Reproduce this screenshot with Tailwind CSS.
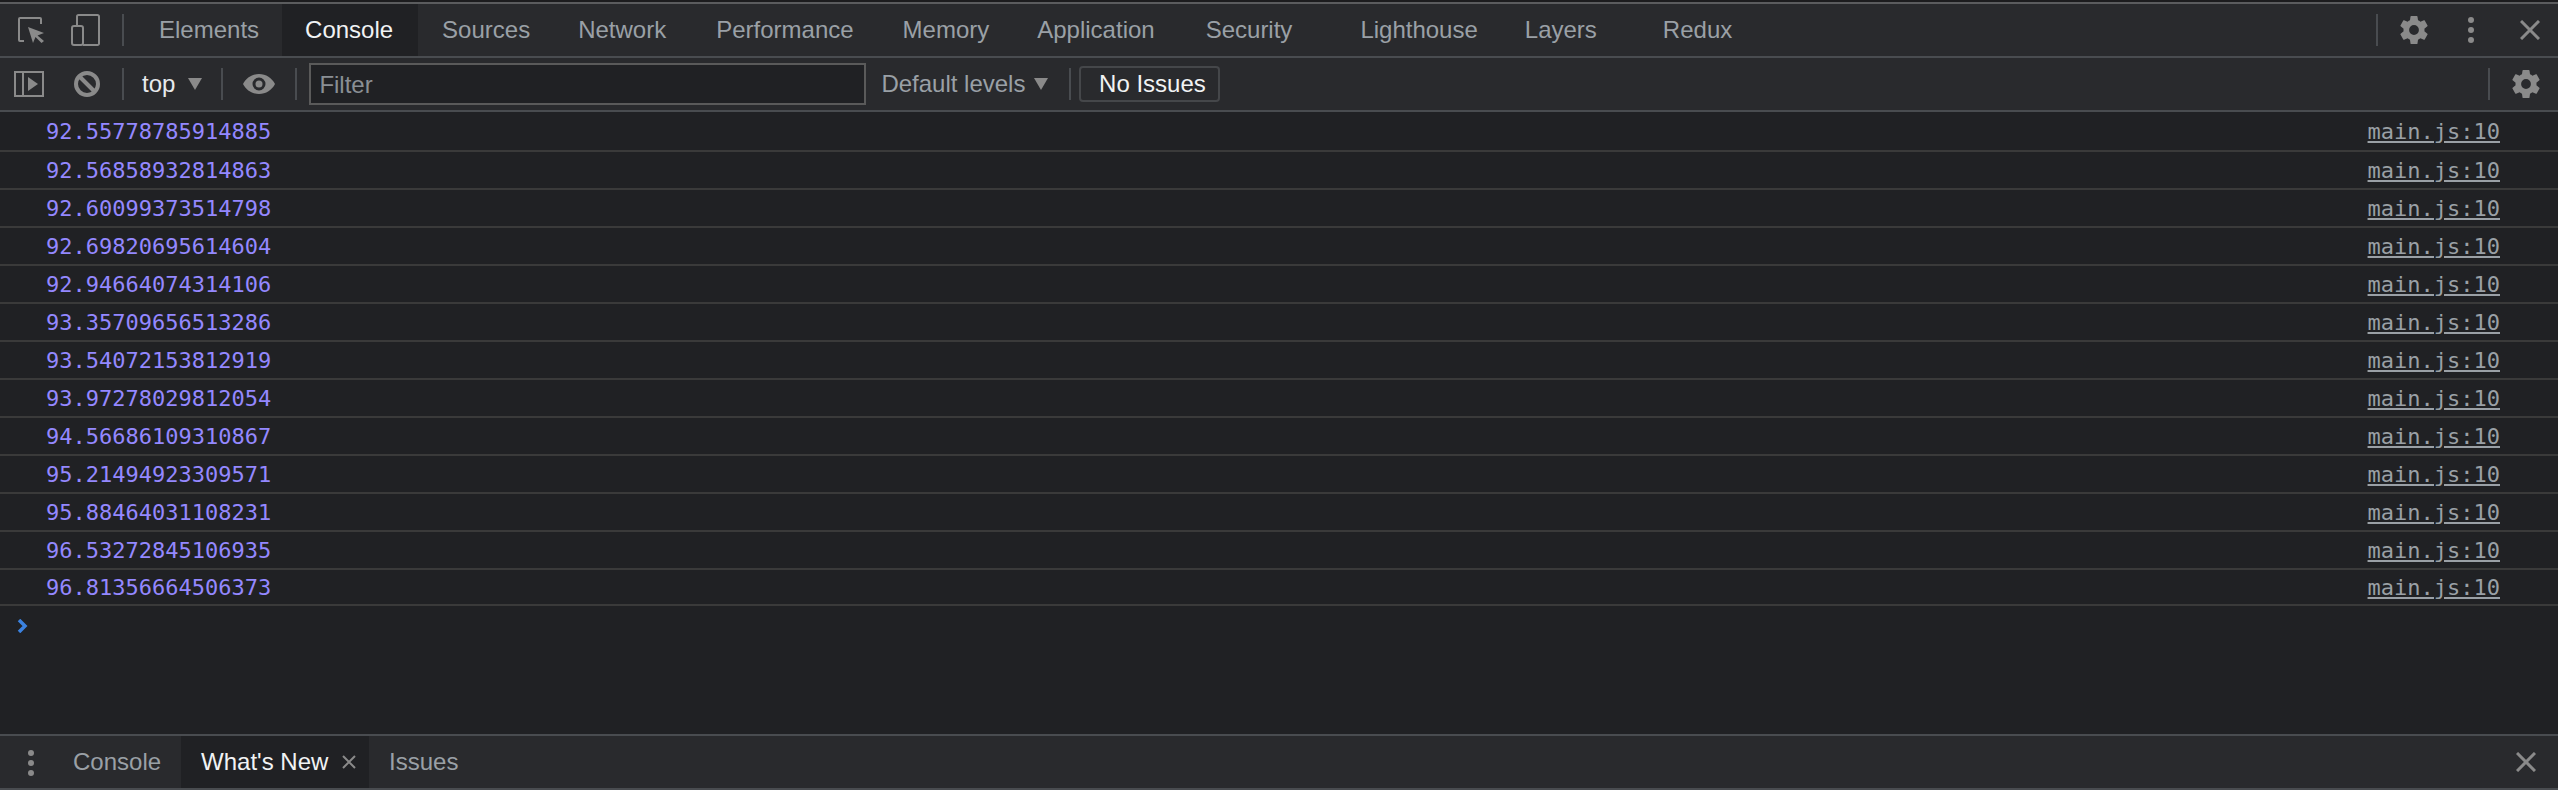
<!DOCTYPE html>
<html lang="en">
<head>
    <meta charset="UTF-8">
    <title>DevTools Console</title>
    <script src="https://cdn.jsdelivr.net/npm/@tailwindcss/browser@4"></script>
</head>
<body class="h-[790px] overflow-hidden bg-[#202124] font-['Liberation_Sans',Arial,sans-serif] text-[24px]">
    <div class="flex h-[790px] flex-col border-t-[2px] border-[#1c1c1e]">

        <!-- Main tabs -->
        <div class="flex h-[56px] shrink-0 items-stretch border-t-[2px] border-b-[2px] border-t-[#5b5c5e] border-b-[#494c50] bg-[#292a2d] text-[#9aa0a6]">
            <div class="flex w-[122px] shrink-0 items-center">
                <svg class="ml-[18px]" width="27" height="26" viewBox="0 0 27 26" fill="none"><path d="M6 24H2a1 1 0 0 1-1-1V2a1 1 0 0 1 1-1h20a1 1 0 0 1 1 1v5" stroke="#8a8a8a" stroke-width="2"/><path d="M10 10l16 6-6.500 2.500L26 24l-2.500 2-6-6L15 26z" fill="#8a8a8a"/></svg>
                <svg class="ml-[26px]" width="29" height="32" viewBox="0 0 29 32" fill="none"><path d="M6 11V2.500A1.500 1.500 0 0 1 7.500 1h19A1.500 1.500 0 0 1 28 2.500v27a1.500 1.500 0 0 1-1.500 1.500H12" stroke="#8a8a8a" stroke-width="2"/><rect x="1" y="12" width="11" height="19" rx="2" stroke="#8a8a8a" stroke-width="2"/></svg>
            </div>
            <div class="my-[10px] w-[2px] bg-[#494c50]"></div>
            <div class="flex pl-[35px]">
                <div class="flex items-center pr-[23px]">Elements</div>
                <div class="flex items-center bg-[#202124] pl-[23px] pr-[25px] text-[#f1f3f4]">Console</div>
                <div class="flex items-center px-[24px]">Sources</div>
                <div class="flex items-center px-[24px]">Network</div>
                <div class="ml-[2px] flex items-center px-[24px]">Performance</div>
                <div class="ml-[1px] flex items-center px-[24px]">Memory</div>
                <div class="flex items-center px-[24px]">Application</div>
                <div class="ml-[3px] flex items-center px-[24px]">Security</div>
                <div class="ml-[20px] flex items-center px-[24px]">Lighthouse</div>
                <div class="ml-[-1px] flex items-center px-[24px]">Layers</div>
                <div class="ml-[18px] flex items-center px-[24px]">Redux</div>
            </div>
            <div class="ml-auto flex items-center pr-[18px]">
                <div class="h-[32px] w-[2px] bg-[#494c50]"></div>
                <svg class="ml-[22px]" width="28" height="28" viewBox="2 2 20 20" fill="#8a8a8a"><path d="M19.430 12.980c.04-.32.07-.64.07-.98s-.03-.66-.07-.98l2.110-1.650c.19-.15.240-.42.120-.64l-2-3.460c-.12-.22-.39-.3-.61-.22l-2.490 1c-.52-.4-1.080-.73-1.690-.98l-.38-2.650A.49.49 0 0 0 14 2h-4c-.25 0-.46.18-.49.42l-.38 2.650c-.61.25-1.170.59-1.690.98l-2.490-1c-.23-.09-.49 0-.61.22l-2 3.460c-.13.220-.07.490.12.640l2.110 1.650c-.04.32-.07.650-.07.980s.03.660.07.980l-2.110 1.650c-.19.150-.24.420-.12.640l2 3.460c.12.220.39.300.61.220l2.490-1c.52.400 1.080.730 1.690.980l.38 2.650c.03.240.24.420.49.420h4c.25 0 .46-.18.49-.42l.38-2.650c.61-.25 1.170-.59 1.690-.98l2.490 1c.23.090.49 0 .61-.22l2-3.460c.12-.22.07-.49-.12-.64zM12 15.500a3.500 3.500 0 1 1 0-7 3.500 3.500 0 0 1 0 7z"/></svg>
                <svg class="ml-[40px]" width="6" height="26" viewBox="0 0 6 26" fill="#8a8a8a"><circle cx="3" cy="3" r="3"/><circle cx="3" cy="13" r="3"/><circle cx="3" cy="23" r="3"/></svg>
                <svg class="ml-[46px]" width="20" height="20" viewBox="0 0 20 20" stroke="#8a8a8a" stroke-width="3"><path d="M1 1l18 18M19 1L1 19"/></svg>
            </div>
        </div>

        <!-- Console toolbar -->
        <div class="flex h-[54px] shrink-0 items-center border-b-[2px] border-b-[#494c50] bg-[#292a2d]">
            <svg class="ml-[14px]" width="30" height="26" viewBox="0 0 30 26" fill="none" stroke="#8a8a8a" stroke-width="2"><rect x="1" y="1" width="28" height="24"/><path d="M9 1v24"/><path d="M14 6l10 7-10 7z" fill="#8a8a8a" stroke="none"/></svg>
            <svg class="ml-[30px]" width="26" height="26" viewBox="0 0 26 26" fill="none" stroke="#8a8a8a" stroke-width="4"><circle cx="13" cy="13" r="11"/><path d="M5 5l16 16"/></svg>
            <div class="ml-[22px] h-[32px] w-[2px] bg-[#494c50]"></div>
            <div class="ml-[18px] text-[#e8eaed]">top</div>
            <svg class="ml-[13px]" width="14" height="12" viewBox="0 0 14 12" fill="#8a8a8a"><path d="M0 0h14L7 12z"/></svg>
            <div class="ml-[19px] h-[32px] w-[2px] bg-[#494c50]"></div>
            <svg class="ml-[20px]" width="32" height="20" viewBox="0 0 32 20" fill="#8a8a8a"><path fill-rule="evenodd" d="M16 0c7 0 13 4 16 10-3 6-9 10-16 10S3 16 0 10C3 4 9 0 16 0zm0 3.500a6.500 6.500 0 1 0 0 13 6.500 6.500 0 0 0 0-13z"/><circle cx="16" cy="10" r="3.500"/></svg>
            <div class="ml-[20px] h-[32px] w-[2px] bg-[#494c50]"></div>
            <div class="ml-[12px] flex h-[42px] w-[557px] items-center border-[2px] border-[#5a5a5a] bg-[#202124] pl-[8px] pt-[2px] text-[#8a8f94]">Filter</div>
            <div class="ml-[15px] text-[#9aa0a6]">Default levels</div>
            <svg class="ml-[9px]" width="14" height="12" viewBox="0 0 14 12" fill="#8a8a8a"><path d="M0 0h14L7 12z"/></svg>
            <div class="ml-[21px] h-[32px] w-[2px] bg-[#494c50]"></div>
            <div class="ml-[8px] flex h-[36px] w-[141px] items-center justify-center rounded-[4px] border-[2px] border-[#45474a] pl-[5px] text-[#f1f3f4]">No Issues</div>
            <div class="ml-auto h-[32px] w-[2px] bg-[#494c50]"></div>
            <svg class="ml-[22px] mr-[18px]" width="28" height="28" viewBox="2 2 20 20" fill="#8a8a8a"><path d="M19.430 12.980c.04-.32.07-.64.07-.98s-.03-.66-.07-.98l2.110-1.650c.19-.15.240-.42.120-.64l-2-3.460c-.12-.22-.39-.3-.61-.22l-2.490 1c-.52-.4-1.080-.73-1.690-.98l-.38-2.650A.49.49 0 0 0 14 2h-4c-.25 0-.46.18-.49.42l-.38 2.650c-.61.25-1.170.59-1.690.98l-2.490-1c-.23-.09-.49 0-.61.22l-2 3.460c-.13.220-.07.490.12.640l2.110 1.650c-.04.32-.07.650-.07.980s.03.660.07.980l-2.110 1.650c-.19.150-.24.420-.12.640l2 3.460c.12.220.39.300.61.220l2.490-1c.52.400 1.080.730 1.690.980l.38 2.650c.03.240.24.420.49.420h4c.25 0 .46-.18.49-.42l.38-2.650c.61-.25 1.170-.59 1.690-.98l2.490 1c.23.090.49 0 .61-.22l2-3.460c.12-.22.07-.49-.12-.64zM12 15.500a3.500 3.500 0 1 1 0-7 3.500 3.500 0 0 1 0 7z"/></svg>
        </div>

        <!-- Console messages -->
        <div class="flex-1 font-['DejaVu_Sans_Mono',monospace] text-[22px] leading-none">
            <div class="flex h-[40px] items-center justify-between border-b-[2px] border-[#3a3a3a] pl-[46px] pr-[58px] pt-[2px] text-[#9488ff]"><span>92.55778785914885</span><span class="text-[#9aa0a6] underline">main.js:10</span></div>
            <div class="flex h-[38px] items-center justify-between border-b-[2px] border-[#3a3a3a] pl-[46px] pr-[58px] pt-[1px] text-[#9488ff]"><span>92.56858932814863</span><span class="text-[#9aa0a6] underline">main.js:10</span></div>
            <div class="flex h-[38px] items-center justify-between border-b-[2px] border-[#3a3a3a] pl-[46px] pr-[58px] pt-[1px] text-[#9488ff]"><span>92.60099373514798</span><span class="text-[#9aa0a6] underline">main.js:10</span></div>
            <div class="flex h-[38px] items-center justify-between border-b-[2px] border-[#3a3a3a] pl-[46px] pr-[58px] pt-[1px] text-[#9488ff]"><span>92.69820695614604</span><span class="text-[#9aa0a6] underline">main.js:10</span></div>
            <div class="flex h-[38px] items-center justify-between border-b-[2px] border-[#3a3a3a] pl-[46px] pr-[58px] pt-[1px] text-[#9488ff]"><span>92.94664074314106</span><span class="text-[#9aa0a6] underline">main.js:10</span></div>
            <div class="flex h-[38px] items-center justify-between border-b-[2px] border-[#3a3a3a] pl-[46px] pr-[58px] pt-[1px] text-[#9488ff]"><span>93.35709656513286</span><span class="text-[#9aa0a6] underline">main.js:10</span></div>
            <div class="flex h-[38px] items-center justify-between border-b-[2px] border-[#3a3a3a] pl-[46px] pr-[58px] pt-[1px] text-[#9488ff]"><span>93.54072153812919</span><span class="text-[#9aa0a6] underline">main.js:10</span></div>
            <div class="flex h-[38px] items-center justify-between border-b-[2px] border-[#3a3a3a] pl-[46px] pr-[58px] pt-[1px] text-[#9488ff]"><span>93.97278029812054</span><span class="text-[#9aa0a6] underline">main.js:10</span></div>
            <div class="flex h-[38px] items-center justify-between border-b-[2px] border-[#3a3a3a] pl-[46px] pr-[58px] pt-[1px] text-[#9488ff]"><span>94.56686109310867</span><span class="text-[#9aa0a6] underline">main.js:10</span></div>
            <div class="flex h-[38px] items-center justify-between border-b-[2px] border-[#3a3a3a] pl-[46px] pr-[58px] pt-[1px] text-[#9488ff]"><span>95.21494923309571</span><span class="text-[#9aa0a6] underline">main.js:10</span></div>
            <div class="flex h-[38px] items-center justify-between border-b-[2px] border-[#3a3a3a] pl-[46px] pr-[58px] pt-[1px] text-[#9488ff]"><span>95.88464031108231</span><span class="text-[#9aa0a6] underline">main.js:10</span></div>
            <div class="flex h-[38px] items-center justify-between border-b-[2px] border-[#3a3a3a] pl-[46px] pr-[58px] pt-[1px] text-[#9488ff]"><span>96.53272845106935</span><span class="text-[#9aa0a6] underline">main.js:10</span></div>
            <div class="flex h-[36px] items-center justify-between border-b-[2px] border-[#3a3a3a] pl-[46px] pr-[58px] pt-[2px] text-[#9488ff]"><span>96.81356664506373</span><span class="text-[#9aa0a6] underline">main.js:10</span></div>
            <div class="flex h-[40px] items-center pl-[17px]">
                <svg width="11" height="14" viewBox="0 0 11 14" fill="none" stroke="#3b82e0" stroke-width="3.500"><path d="M2 1l6 6-6 6"/></svg>
            </div>
        </div>

        <!-- Drawer tabs -->
        <div class="flex h-[56px] shrink-0 items-stretch border-y-[2px] border-[#494c50] bg-[#292a2d] text-[#9aa0a6]">
            <svg class="ml-[28px] mt-[14px]" width="6" height="26" viewBox="0 0 6 26" fill="#8a8a8a"><circle cx="3" cy="3" r="3"/><circle cx="3" cy="13" r="3"/><circle cx="3" cy="23" r="3"/></svg>
            <div class="ml-[39px] flex items-center pr-[20px]">Console</div>
            <div class="flex w-[188px] items-center bg-[#202124] pl-[20px] text-[#f1f3f4]">What's New
                <svg class="ml-[14px]" width="14" height="14" viewBox="0 0 14 14" stroke="#8a8a8a" stroke-width="2"><path d="M1 1l12 12M13 1L1 13"/></svg>
            </div>
            <div class="flex items-center pl-[20px]">Issues</div>
            <svg class="ml-auto mr-[22px] mt-[16px]" width="20" height="20" viewBox="0 0 20 20" stroke="#8a8a8a" stroke-width="3"><path d="M1 1l18 18M19 1L1 19"/></svg>
        </div>
    </div>
</body>
</html>
